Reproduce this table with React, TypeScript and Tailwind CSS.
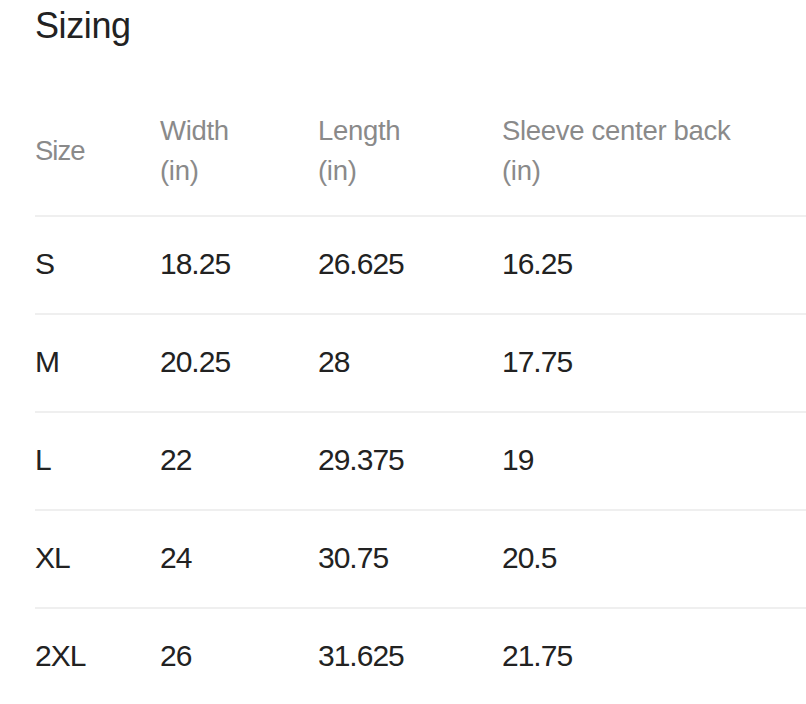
import React from "react";

const rows = [
  ["S", "18.25", "26.625", "16.25"],
  ["M", "20.25", "28", "17.75"],
  ["L", "22", "29.375", "19"],
  ["XL", "24", "30.75", "20.5"],
  ["2XL", "26", "31.625", "21.75"],
];

export default function App() {
  return (
    <div
      className="w-[806px] h-[704px] overflow-hidden bg-white pl-[35px] text-[#222222]"
      style={{ fontFamily: '"Liberation Sans", Arial, sans-serif' }}
    >
      <h1 className="h-[52px] text-[36px] leading-[52px] tracking-[-0.4px] font-normal">Sizing</h1>
      <div className="mt-[59px] grid grid-cols-[125px_158px_184px_1fr] text-[27.5px] leading-[40px] tracking-[-0.3px] text-[#8a8a8a] pb-[24px]">
        <div className="flex items-center tracking-[-1px]">Size</div>
        <div>
          Width
          <br />
          (in)
        </div>
        <div>
          Length
          <br />
          (in)
        </div>
        <div>
          Sleeve center back
          <br />
          (in)
        </div>
      </div>
      {rows.map((r) => (
        <div
          key={r[0]}
          className="grid grid-cols-[125px_158px_184px_1fr] h-[98px] pb-[4px] items-center border-t-2 border-[#efefef] text-[30px] tracking-[-1px]"
        >
          {r.map((c, i) => (
            <div key={i}>{c}</div>
          ))}
        </div>
      ))}
    </div>
  );
}
